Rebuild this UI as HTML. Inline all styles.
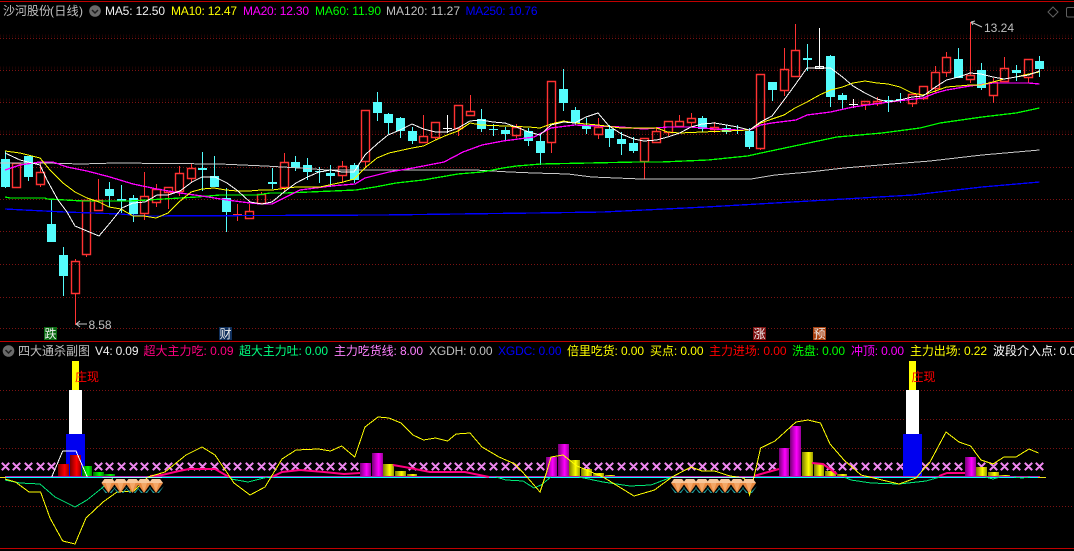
<!DOCTYPE html>
<html lang="zh-CN">
<head>
<meta charset="utf-8">
<title>沙河股份 (日线)</title>
<style>
html,body{margin:0;padding:0;background:#000;width:1074px;height:551px;overflow:hidden}
svg{display:block}
text{font-family:"Liberation Sans","Noto Sans CJK SC",sans-serif;font-size:12px;white-space:pre}
</style>
</head>
<body>
<svg width="1074" height="551" viewBox="0 0 1074 551" xmlns="http://www.w3.org/2000/svg">
<defs>
<linearGradient id="gr"><stop offset="0" stop-color="#700"/><stop offset=".6" stop-color="#f00"/><stop offset="1" stop-color="#900"/></linearGradient>
<linearGradient id="gg"><stop offset="0" stop-color="#060"/><stop offset=".6" stop-color="#0f0"/><stop offset="1" stop-color="#080"/></linearGradient>
<linearGradient id="gm"><stop offset="0" stop-color="#707"/><stop offset=".6" stop-color="#f0f"/><stop offset="1" stop-color="#909"/></linearGradient>
<linearGradient id="gy"><stop offset="0" stop-color="#770"/><stop offset=".6" stop-color="#ff0"/><stop offset="1" stop-color="#990"/></linearGradient>
<g id="dm">
<path d="M-8 6L-3 13H-1ZM8 6L3 13H1Z" fill="#1f9c9c"/>
<path d="M-7 3L-4 -1H4L7 3L0 13Z" fill="#e88a42"/>
<path d="M-7 3L-4 -1H4L7 3Z" fill="#f8c79a"/>
<path d="M-3 3H3L0 12Z" fill="#f4a868"/>
<path d="M-6 -2.500H6" stroke="#aff" stroke-width="1" opacity=".8"/>
</g>
</defs>
<rect width="1074" height="551" fill="#000"/>

<!-- main grid -->
<g stroke="#3a0606" stroke-width="3" stroke-dasharray="1 2" fill="none" opacity=".5">
<path d="M0 36H1074M0 68H1074M0 100H1074M0 132H1074"/>
</g>
<g stroke="#7c1212" stroke-width="1" stroke-dasharray="1 2" fill="none">
<path d="M0 38.500H1074M0 70.500H1074M0 102.500H1074M0 134.500H1074M0 167.500H1074M0 199.500H1074M0 231.500H1074M0 264.500H1074M0 297.500H1074M0 328.500H1074"/>
<path d="M0 390.500H1074M0 419.500H1074M0 448.500H1074M0 506.500H1074"/>
</g>
<path d="M0 1.500H1074M0 341.500H1074M0 548.500H1074" stroke="#c00000" stroke-width="1" fill="none"/>

<!-- red wicks -->
<path fill="none" stroke="#ff3232" stroke-width="1" d="M40.500 162V172M40.500 184V187M75.500 259V261M75.500 293V325M86.500 254V257M98.500 179V200M144.500 172V196M144.500 213V220M156.500 184V189M156.500 202V207M168.500 192V209M179.500 166V173M179.500 191V196M191.500 164V168M191.500 178V182M237.500 204V221M233 214.500H242M249.500 204V211M261.500 192V194M284.500 153V162M284.500 187V192M342.500 161V166M342.500 175V183M365.500 161V167M423.500 115V136M423.500 142V143M435.500 137V140M458.500 128V136M470.500 95V111M516.500 124V127M516.500 135V138M551.500 142V153M598.500 118V127M598.500 134V139M644.500 161V179M656.500 127V131M668.500 132V136M679.500 115V121M679.500 126V127M691.500 113V118M691.500 122V127M714.500 122V127M714.500 129V133M760.500 148V150M784.500 48V69M784.500 90V96M795.500 24V50M865.500 104V110M877.500 97V101M877.500 103V106M912.500 103V107M923.500 98V100M935.500 66V72M935.500 88V93M946.500 52V57M946.500 72V77M970.500 22V75M970.500 79V83M993.500 78V82M993.500 95V103M1004.500 57V68M1028.500 77V83"/>
<!-- red bodies -->
<path fill="none" stroke="#ff3232" stroke-width="1.400" d="M12.500 163.500H20.500V187.500H12.500ZM36.500 172.500H44.500V184.500H36.500ZM71.500 261.500H79.500V293.500H71.500ZM82.500 200.500H90.500V254.500H82.500ZM94.500 200.500H102.500V210.500H94.500ZM140.500 196.500H148.500V213.500H140.500ZM152.500 189.500H160.500V202.500H152.500ZM164.500 187.500H172.500V192.500H164.500ZM175.500 173.500H183.500V191.500H175.500ZM187.500 168.500H195.500V178.500H187.500ZM245.500 211.500H253.500V218.500H245.500ZM257.500 194.500H265.500V203.500H257.500ZM280.500 162.500H288.500V187.500H280.500ZM338.500 166.500H346.500V175.500H338.500ZM361.500 110.500H369.500V161.500H361.500ZM419.500 136.500H427.500V142.500H419.500ZM431.500 122.500H439.500V137.500H431.500ZM454.500 105.500H462.500V128.500H454.500ZM466.500 111.500H474.500V115.500H466.500ZM512.500 127.500H520.500V135.500H512.500ZM547.500 81.500H555.500V142.500H547.500ZM594.500 127.500H602.500V134.500H594.500ZM640.500 138.500H648.500V161.500H640.500ZM652.500 131.500H660.500V142.500H652.500ZM664.500 121.500H672.500V132.500H664.500ZM675.500 121.500H683.500V126.500H675.500ZM687.500 118.500H695.500V122.500H687.500ZM710.500 127.500H718.500V129.500H710.500ZM756.500 74.500H764.500V148.500H756.500ZM780.500 69.500H788.500V90.500H780.500ZM791.500 50.500H799.500V76.500H791.500ZM861.500 101.500H869.500V104.500H861.500ZM873.500 101.500H881.500V103.500H873.500ZM908.500 94.500H916.500V103.500H908.500ZM919.500 86.500H927.500V98.500H919.500ZM931.500 72.500H939.500V88.500H931.500ZM942.500 57.500H950.500V72.500H942.500ZM966.500 75.500H974.500V79.500H966.500ZM989.500 82.500H997.500V95.500H989.500ZM1000.500 68.500H1008.500V81.500H1000.500ZM1024.500 59.500H1032.500V77.500H1024.500Z"/>
<!-- cyan wicks -->
<path fill="none" stroke="#54fcfc" stroke-width="1" d="M5.500 151V159M5.500 187V188M28.500 156V181M51.500 199V224M63.500 247V255M63.500 276V296M109.500 182V189M109.500 196V207M121.500 185V213M133.500 195V198M133.500 214V222M202.500 152V191M214.500 156V176M226.500 188V198M226.500 212V232M272.500 168V189M295.500 156V162M295.500 168V171M307.500 158V165M307.500 172V180M319.500 167V183M330.500 165V173M330.500 176V187M354.500 163V165M354.500 180V183M377.500 92V102M377.500 113V121M388.500 113V114M388.500 123V134M400.500 117V118M400.500 131V138M412.500 127V131M412.500 141V144M481.500 109V119M481.500 129V132M493.500 124V136M505.500 127V130M505.500 134V141M528.500 128V131M528.500 141V146M540.500 133V141M540.500 153V165M563.500 69V89M563.500 103V111M575.500 107V110M575.500 123V125M586.500 118V125M586.500 129V134M609.500 125V129M609.500 138V147M621.500 132V139M621.500 144V155M633.500 137V143M633.500 151V153M702.500 116V118M702.500 129V132M726.500 125V128M726.500 132V134M737.500 125V134M749.500 128V131M749.500 147V149M772.500 90V101M807.500 44V71M830.500 55V56M830.500 97V107M842.500 93V95M842.500 100V109M888.500 96V112M900.500 93V103M958.500 48V59M981.500 63V70M981.500 88V90M1016.500 65V70M1016.500 73V81M1039.500 56V61M1039.500 69V77"/>
<!-- cyan bodies -->
<path fill="#54fcfc" d="M1 159h9v28H1ZM24 156h9v21h-9ZM47 224h9v18h-9ZM59 255h9v21h-9ZM105 189h9v7h-9ZM117 199h9v2h-9ZM129 198h9v16h-9ZM198 168h9v2h-9ZM210 176h9v11h-9ZM222 198h9v14h-9ZM268 182h9v2h-9ZM291 162h9v6h-9ZM303 165h9v7h-9ZM315 171h9v1h-9ZM326 173h9v3h-9ZM350 165h9v15h-9ZM373 102h9v11h-9ZM384 114h9v9h-9ZM396 118h9v13h-9ZM408 131h9v10h-9ZM477 119h9v10h-9ZM489 129h9v1h-9ZM501 130h9v4h-9ZM524 131h9v10h-9ZM536 141h9v12h-9ZM559 89h9v14h-9ZM571 110h9v13h-9ZM582 125h9v4h-9ZM605 129h9v9h-9ZM617 139h9v5h-9ZM629 143h9v8h-9ZM698 118h9v11h-9ZM722 128h9v4h-9ZM733 130h9v1h-9ZM745 131h9v16h-9ZM768 82h9v8h-9ZM803 58h9v2h-9ZM826 56h9v41h-9ZM838 95h9v5h-9ZM884 100h9v1h-9ZM896 99h9v1h-9ZM954 59h9v19h-9ZM977 70h9v18h-9ZM1012 70h9v3h-9ZM1035 61h9v8h-9Z"/>
<!-- white dojis -->
<path fill="none" stroke="#fff" stroke-width="1" d="M447.500 115V133M443 128.500H452M819.500 28V68M815.500 66.500H823.500V68.500H815.500ZM853.500 99V108M849 104.500H858"/>

<!-- MA lines -->
<g fill="none" stroke-width="1" stroke-linejoin="round" shape-rendering="crispEdges">
<polyline stroke="#c8c8c8" points="0,163 45,163 81,164 115,163 220,164 265,166 300,168 327,170 396,170 475,170 510,172 534,173 568,174 592,177 641,179 696,179 751,179 775,175 809.500,172 844,168 892,164 930,161 982,155 1039.500,150"/>
<polyline stroke="#0000ff" stroke-width="1.300" points="5,209 24,210 65,212 120,214 145,216 382,215 534,213 603,212 706,207 827,200 913,195 982,187 1039.500,182"/>
<polyline stroke="#00ff00" stroke-width="1.300" points="5,197 10,198 45,198 47,199 83,201 130,201 197,197 220,195 257,195 270,193 286,193 356,190 375,187 396,183 423,180 458,174 482,172 503,168 516.500,166 541,164 637,162 661,162 708,160 747.500,156 761,153 799,145 837,137 882,133 920,128 940,123 982,117 1016,113 1039.500,108"/>
<polyline stroke="#ff00ff" stroke-width="1.300" points="5,170 20,165 40,162 53,162 67,167 87,171 110,177 133,184 157,189 180,193 202,196 227,200 250,203 262,204 272,204 286,197 300,190 331,186 355,184 365,178 389,172 413,168 444,162 463,152 482,145 503,141 534,137 551,128 575,125 598,126 621,127 644,129 668,127 691,127 714.500,129 737.500,130 749.600,130 760.600,125 772,123 796,120 807,115 830.500,112 853,107 889,102 923,98 935.500,93 946.500,90 970,86 993,83 1028.500,83 1039.500,84"/>
<polyline stroke="#ffff00" points="5,151 20,153 40,158 50,170 63,183 75,192 87,198 99,202 109,207 121,209 133,216 144,216 156,218 168,213 179,202 191,192 202,189 214,188 226,190 237,191 249,191 261,190 272,190 296,187 320,187 343,182 354,179 366,167 377,158 389,153 412,148 423.500,146 435.600,140 447,135 458,131 470,123 481,125 505,126 528.600,127 540,128 551,124 563.600,121 574.600,123 598,125 621,128 644,128 656.600,128 667.600,132 679.700,133 702,132 726.500,131 749.600,130 760.600,123 772,119 784,115 795,108 807,102 819.500,95 830.500,90 842.500,87 853,83 865,81 877,83 888,84 900,87 912,93 923,95 935.500,91 946.500,87 958.600,86 970,85 981,85 993,82 1004,79 1016,77 1028.500,74 1039.500,72"/>
<polyline stroke="#ffffff" points="5,153 20,160 40,165 47,180 58,200 67,212 75,226 99,236 110,223 122,208 133,203 145,202 157,195 168,195 180,191 192,182 202,177 215,177 227,183 238,191 250,202 262,204 272,202 284,192 296,183 307.500,177 319,172 330.600,170 342,172 354,172 365,155 377,144 388,135 400,130 412,124 423.500,129 435.600,132 447,132 458,128 470,121 481,120 493,122 505,123 516.500,127 528.600,132 540,135 551,125 563.600,122 574.600,123 586,117 598,113 609,126 621.500,134 633.500,139 644,141 656.600,140 667.600,137 679.700,133 691,127 702,124 714.500,123 726.500,125 737.500,127 749.600,130 760.600,122 772,116 784,100 795,85 807,68 819.500,68 830.500,68 842.500,77 853,86 865,93 877,99 888,102 900,100 912,97 923,96 935.500,87 946.500,80 958.600,77 970,73 981,74 993,77 1004,79 1016,77 1028.500,75 1039.500,71"/>
</g>

<!-- price marks -->
<path fill="none" stroke="#c8c8c8" stroke-width="1" d="M971 22L982 27M971 22L975 21M971 22L973 25M76 324H87M76 324L80 321M76 324L80 327"/>
<text x="984" y="32" fill="#c0c0c0" textLength="30" lengthAdjust="spacing">13.24</text>
<text x="88.500" y="329" fill="#c0c0c0" textLength="23" lengthAdjust="spacing">8.58</text>

<!-- signal tags -->
<rect x="44" y="327" width="13" height="13" fill="#0a6a12"/><text x="44.500" y="338" fill="#eee">跌</text>
<rect x="219" y="327" width="13" height="13" fill="#0f2f5c"/><text x="219.500" y="338" fill="#eee">财</text>
<rect x="753" y="327" width="13" height="13" fill="#7c1010"/><text x="753.500" y="338" fill="#eee">涨</text>
<rect x="813" y="327" width="13" height="13" fill="#a8400f"/><text x="813.500" y="338" fill="#eee">预</text>

<!-- header -->
<text x="3" y="15" fill="#c0c0c0">沙河股份</text>
<text x="50" y="15" fill="#c0c0c0" textLength="33" lengthAdjust="spacing">(日线)</text>
<circle cx="95" cy="11" r="5.800" fill="#6a6a6a"/><path d="M92 10l3 3 3-3" fill="none" stroke="#1c1c1c" stroke-width="1.500"/>
<text x="105" y="15" fill="#f0f0f0" textLength="60" lengthAdjust="spacing">MA5: 12.50</text>
<text x="171" y="15" fill="#ffff00" textLength="66" lengthAdjust="spacing">MA10: 12.47</text>
<text x="243" y="15" fill="#ff00ff" textLength="66" lengthAdjust="spacing">MA20: 12.30</text>
<text x="315" y="15" fill="#00ff00" textLength="66" lengthAdjust="spacing">MA60: 11.90</text>
<text x="386" y="15" fill="#c0c0c0" textLength="74" lengthAdjust="spacing">MA120: 11.27</text>
<text x="465.500" y="15" fill="#0000ff" textLength="72" lengthAdjust="spacing">MA250: 10.76</text>
<path d="M1053 7l5 5-5 5-5-5Z" fill="none" stroke="#606060"/>
<path d="M1074 7.500H1068Q1066.500 7.500 1066.500 9V15.500Q1066.500 17 1068 17H1074" fill="none" stroke="#606060"/>

<!-- sub header -->
<circle cx="8.500" cy="351" r="5.800" fill="#6a6a6a"/><path d="M5.500 350l3 3 3-3" fill="none" stroke="#1c1c1c" stroke-width="1.500"/>
<text x="18" y="355" fill="#c0c0c0">四大通杀副图</text>
<text x="95" y="355" fill="#f0f0f0" textLength="43.500" lengthAdjust="spacing">V4: 0.09</text>
<text x="143.500" y="355" fill="#ff0080" textLength="90" lengthAdjust="spacing">超大主力吃: 0.09</text>
<text x="239" y="355" fill="#00ff80" textLength="89" lengthAdjust="spacing">超大主力吐: 0.00</text>
<text x="334" y="355" fill="#ff80ff" textLength="89" lengthAdjust="spacing">主力吃货线: 8.00</text>
<text x="429" y="355" fill="#c0c0c0" textLength="63.500" lengthAdjust="spacing">XGDH: 0.00</text>
<text x="498" y="355" fill="#0000ff" textLength="63.500" lengthAdjust="spacing">XGDC: 0.00</text>
<text x="567" y="355" fill="#ffff00" textLength="77" lengthAdjust="spacing">倍里吃货: 0.00</text>
<text x="650" y="355" fill="#ffff00" textLength="53.500" lengthAdjust="spacing">买点: 0.00</text>
<text x="709" y="355" fill="#ff0000" textLength="77.500" lengthAdjust="spacing">主力进场: 0.00</text>
<text x="792" y="355" fill="#00ff00" textLength="53" lengthAdjust="spacing">洗盘: 0.00</text>
<text x="851" y="355" fill="#ff00ff" textLength="53" lengthAdjust="spacing">冲顶: 0.00</text>
<text x="910" y="355" fill="#ffff00" textLength="77" lengthAdjust="spacing">主力出场: 0.22</text>
<text x="993" y="355" fill="#ffffff" textLength="90" lengthAdjust="spacing">波段介入点: 0.00</text>

<!-- X markers -->
<path fill="none" stroke="#f088f0" stroke-width="2" stroke-linecap="square" d="M2.500 463.500l6 6m0-6l-6 6M13.500 463.500l6 6m0-6l-6 6M25.500 463.500l6 6m0-6l-6 6M37.500 463.500l6 6m0-6l-6 6M48.500 463.500l6 6m0-6l-6 6M95.500 463.500l6 6m0-6l-6 6M106.500 463.500l6 6m0-6l-6 6M118.500 463.500l6 6m0-6l-6 6M130.500 463.500l6 6m0-6l-6 6M141.500 463.500l6 6m0-6l-6 6M153.500 463.500l6 6m0-6l-6 6M165.500 463.500l6 6m0-6l-6 6M176.500 463.500l6 6m0-6l-6 6M188.500 463.500l6 6m0-6l-6 6M199.500 463.500l6 6m0-6l-6 6M211.500 463.500l6 6m0-6l-6 6M223.500 463.500l6 6m0-6l-6 6M234.500 463.500l6 6m0-6l-6 6M246.500 463.500l6 6m0-6l-6 6M258.500 463.500l6 6m0-6l-6 6M269.500 463.500l6 6m0-6l-6 6M281.500 463.500l6 6m0-6l-6 6M292.500 463.500l6 6m0-6l-6 6M304.500 463.500l6 6m0-6l-6 6M316.500 463.500l6 6m0-6l-6 6M327.500 463.500l6 6m0-6l-6 6M339.500 463.500l6 6m0-6l-6 6M351.500 463.500l6 6m0-6l-6 6M409.500 463.500l6 6m0-6l-6 6M420.500 463.500l6 6m0-6l-6 6M432.500 463.500l6 6m0-6l-6 6M444.500 463.500l6 6m0-6l-6 6M455.500 463.500l6 6m0-6l-6 6M467.500 463.500l6 6m0-6l-6 6M478.500 463.500l6 6m0-6l-6 6M490.500 463.500l6 6m0-6l-6 6M502.500 463.500l6 6m0-6l-6 6M513.500 463.500l6 6m0-6l-6 6M525.500 463.500l6 6m0-6l-6 6M537.500 463.500l6 6m0-6l-6 6M583.500 463.500l6 6m0-6l-6 6M595.500 463.500l6 6m0-6l-6 6M606.500 463.500l6 6m0-6l-6 6M618.500 463.500l6 6m0-6l-6 6M630.500 463.500l6 6m0-6l-6 6M641.500 463.500l6 6m0-6l-6 6M653.500 463.500l6 6m0-6l-6 6M665.500 463.500l6 6m0-6l-6 6M676.500 463.500l6 6m0-6l-6 6M688.500 463.500l6 6m0-6l-6 6M699.500 463.500l6 6m0-6l-6 6M711.500 463.500l6 6m0-6l-6 6M723.500 463.500l6 6m0-6l-6 6M734.500 463.500l6 6m0-6l-6 6M746.500 463.500l6 6m0-6l-6 6M757.500 463.500l6 6m0-6l-6 6M769.500 463.500l6 6m0-6l-6 6M827.500 463.500l6 6m0-6l-6 6M839.500 463.500l6 6m0-6l-6 6M850.500 463.500l6 6m0-6l-6 6M862.500 463.500l6 6m0-6l-6 6M874.500 463.500l6 6m0-6l-6 6M885.500 463.500l6 6m0-6l-6 6M897.500 463.500l6 6m0-6l-6 6M922.500 463.500l6 6m0-6l-6 6M932.500 463.500l6 6m0-6l-6 6M943.500 463.500l6 6m0-6l-6 6M955.500 463.500l6 6m0-6l-6 6M978.500 463.500l6 6m0-6l-6 6M990.500 463.500l6 6m0-6l-6 6M1001.500 463.500l6 6m0-6l-6 6M1013.500 463.500l6 6m0-6l-6 6M1025.500 463.500l6 6m0-6l-6 6M1036.500 463.500l6 6m0-6l-6 6"/>

<!-- tall pillars -->
<rect x="66" y="434" width="19" height="43" fill="#0000f0"/>
<rect x="69" y="390" width="13" height="44" fill="#fff"/>
<rect x="72" y="361" width="7" height="29" fill="#ff0"/>
<rect x="903" y="434" width="19" height="43" fill="#0000f0"/>
<rect x="906" y="390" width="13" height="44" fill="#fff"/>
<rect x="909" y="361" width="7" height="29" fill="#ff0"/>

<!-- volume style bars -->
<g>
<rect x="58" y="464" width="11" height="13" fill="url(#gr)"/>
<rect x="70" y="455" width="11" height="22" fill="url(#gr)"/>
<rect x="82" y="466" width="10" height="11" fill="url(#gg)"/>
<rect x="93" y="472" width="11" height="5" fill="url(#gg)"/>
<rect x="104" y="474" width="11" height="3" fill="url(#gg)"/>
<rect x="360" y="463" width="11" height="14" fill="url(#gm)"/>
<rect x="372" y="453" width="11" height="24" fill="url(#gm)"/>
<rect x="383" y="464" width="11" height="13" fill="url(#gy)"/>
<rect x="395" y="471" width="11" height="6" fill="url(#gy)"/>
<rect x="407" y="474" width="10" height="3" fill="url(#gy)"/>
<rect x="419" y="476" width="10" height="1" fill="url(#gy)"/>
<rect x="430" y="476" width="11" height="1" fill="url(#gy)"/>
<rect x="546" y="457" width="11" height="20" fill="url(#gm)"/>
<rect x="558" y="444" width="11" height="33" fill="url(#gm)"/>
<rect x="569" y="460" width="11" height="17" fill="url(#gy)"/>
<rect x="581" y="469" width="11" height="8" fill="url(#gy)"/>
<rect x="593" y="473" width="11" height="4" fill="url(#gy)"/>
<rect x="605" y="475" width="10" height="2" fill="url(#gy)"/>
<rect x="617" y="476" width="8" height="1" fill="url(#gy)"/>
<rect x="779" y="448" width="10" height="29" fill="url(#gm)"/>
<rect x="790" y="426" width="11" height="51" fill="url(#gm)"/>
<rect x="802" y="452" width="11" height="25" fill="url(#gy)"/>
<rect x="814" y="464" width="10" height="13" fill="url(#gy)"/>
<rect x="825" y="471" width="11" height="6" fill="url(#gy)"/>
<rect x="837" y="474" width="10" height="3" fill="url(#gy)"/>
<rect x="849" y="476" width="10" height="1" fill="url(#gy)"/>
<rect x="965" y="457" width="11" height="20" fill="url(#gm)"/>
<rect x="976" y="467" width="11" height="10" fill="url(#gy)"/>
<rect x="988" y="472" width="11" height="5" fill="url(#gy)"/>
<rect x="999" y="475" width="11" height="2" fill="url(#gy)"/>
</g>

<!-- zero lines -->
<path d="M5 476.500H1040" stroke="#b020b0" stroke-width="1"/>
<path d="M5 477.500H1040" stroke="#00ffff" stroke-width="1"/>
<path d="M1038 477.500H1046M0 477.500H6" stroke="#e8e020" stroke-width="1"/>

<!-- thick pink -->
<g fill="none" stroke="#ff0080" stroke-width="2">
<polyline points="150,476 162,475 179,471 189,469 215,469 229,477"/>
<polyline points="272,477 282,472 300,470 324,472 344,474 360,473"/>
<polyline points="393,465 410,468 430,472 465,472 489,477"/>
<polyline points="754,476 768,472 779,469"/>
<polyline points="812,463 823,464 837,474"/>
<polyline points="939,476 947,473 965,473"/>
</g>

<!-- thin green -->
<g fill="none" stroke="#00e878" stroke-width="1" shape-rendering="crispEdges">
<polyline points="5,480 20,483 40,484 55,497 75,507 87,500 102,488 113,478"/>
<polyline points="231,479 248,482 268,477"/>
<polyline points="496,477 506,480 523,481 534,488 541,485 551,477"/>
<polyline points="579,477 603,482 630,486 651,485 672,477"/>
<polyline points="844,477 851,480 871,483 899,484 926,481 940,477"/>
<polyline points="985,477 993,479 1000,477"/>
<polyline points="1014,477 1022,478 1030,477"/>
</g>

<!-- thin yellow -->
<polyline fill="none" stroke="#ffff00" stroke-width="1" shape-rendering="crispEdges" points="5,479 15.500,482 29,492 40.600,492 50,518 62.700,541 75,544 86,518 103,502 117,492 134,491 148,477 165,472 186,455 202,447 215,455 234,483 250,495 265,487 282,459 296,450 318.500,449 330.600,451 341.600,446 354.700,457 365,427 378,417 389,418 401,423 413,435 423.500,440 435.600,438 447.600,441 456,434 470,433 482,447 499,457 515,464 527,477 540,492 546.700,472 551,457 563,455 577,466 603,477 634,496 654.500,490 672,477 691,467 702,471 714.500,471 730,476 744,478 749.600,495 754,477 760.600,448 775,441 796,422 808,420 820.500,423 830,444 844,460 861,475 899,484 916,478 930,462 946,432 959,442 970.600,446 981,460 993,464 1004,457 1016,457 1029,449 1038.500,453"/>

<!-- white trapezoid -->
<polyline fill="none" stroke="#fff" stroke-width="1" shape-rendering="crispEdges" points="51.700,477 62.700,451 76,451 87.300,477"/>

<!-- diamonds -->
<use href="#dm" x="108.500" y="480"/>
<use href="#dm" x="120.500" y="480"/>
<use href="#dm" x="132.500" y="480"/>
<use href="#dm" x="144" y="480"/>
<use href="#dm" x="156" y="480"/>
<use href="#dm" x="678" y="480"/>
<use href="#dm" x="690" y="480"/>
<use href="#dm" x="702" y="480"/>
<use href="#dm" x="713.500" y="480"/>
<use href="#dm" x="725" y="480"/>
<use href="#dm" x="737" y="480"/>
<use href="#dm" x="749" y="480"/>

<!-- 庄现 -->
<text x="75" y="381" fill="#ff0000">庄现</text>
<text x="911.500" y="381" fill="#ff0000">庄现</text>
</svg>
</body>
</html>
